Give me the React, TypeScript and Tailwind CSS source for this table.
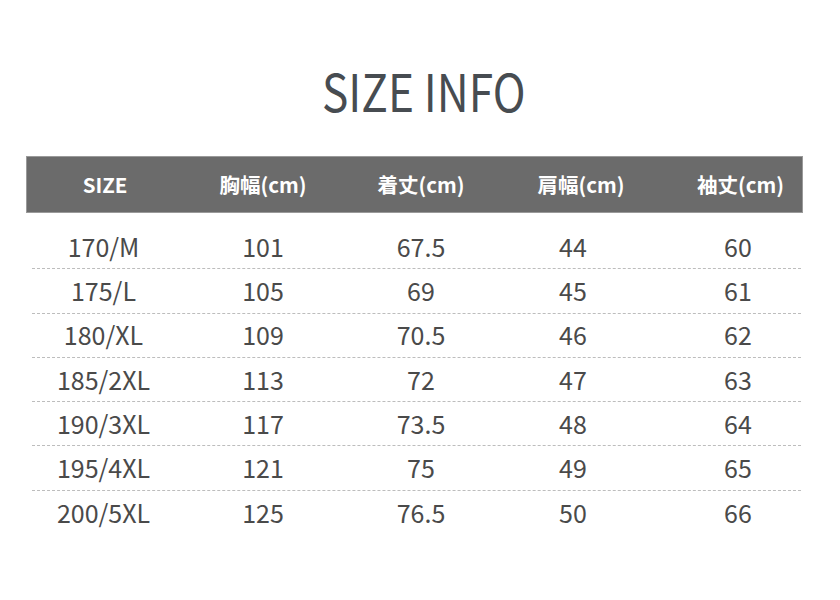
const HEAD = ["SIZE", "胸幅(cm)", "着丈(cm)", "肩幅(cm)", "袖丈(cm)"];

const ROWS = [
  ["170/M", "101", "67.5", "44", "60"],
  ["175/L", "105", "69", "45", "61"],
  ["180/XL", "109", "70.5", "46", "62"],
  ["185/2XL", "113", "72", "47", "63"],
  ["190/3XL", "117", "73.5", "48", "64"],
  ["195/4XL", "121", "75", "49", "65"],
  ["200/5XL", "125", "76.5", "50", "66"],
];

export default function App() {
  return (
    <div className="w-[840px] h-[600px] bg-white font-['Noto_Sans_CJK_JP',sans-serif] overflow-hidden">
      <div className="pt-[58px] flex justify-center">
        <h1 className="text-[52px] leading-[64px] text-[#474c51] scale-x-[0.85] ml-2">SIZE INFO</h1>
      </div>

      <div className="mt-[34px] ml-[26px] mr-[37px]">
        <div className="grid grid-cols-[156px_160px_156px_152px_1fr] h-[57px] bg-[#6b6b6b] border border-[#9a9a9a] items-center text-white font-bold text-[20.5px]">
          {HEAD.map((h, i) => (
            <div key={h} className={`text-center ${i === 3 ? "pl-3" : ""} ${i === 4 ? "pl-7" : ""}`}>
              {h}
            </div>
          ))}
        </div>

        <div className="mt-3 ml-[6px] mr-[2px]">
          {ROWS.map((r, ri) => (
            <div
              key={r[0]}
              className={`grid grid-cols-[151px_160px_156px_148px_1fr] h-[44.3px] items-center text-[25px] text-[#4a4a4a] ${
                ri < ROWS.length - 1 ? "border-b border-dashed border-[#bdbdbd]" : ""
              }`}
            >
              {r.map((c, i) => (
                <div key={i} className={`text-center ${i === 0 ? "pr-2" : ""} ${i === 4 ? "pl-7" : ""}`}>
                  {c}
                </div>
              ))}
            </div>
          ))}
        </div>
      </div>
    </div>
  );
}
